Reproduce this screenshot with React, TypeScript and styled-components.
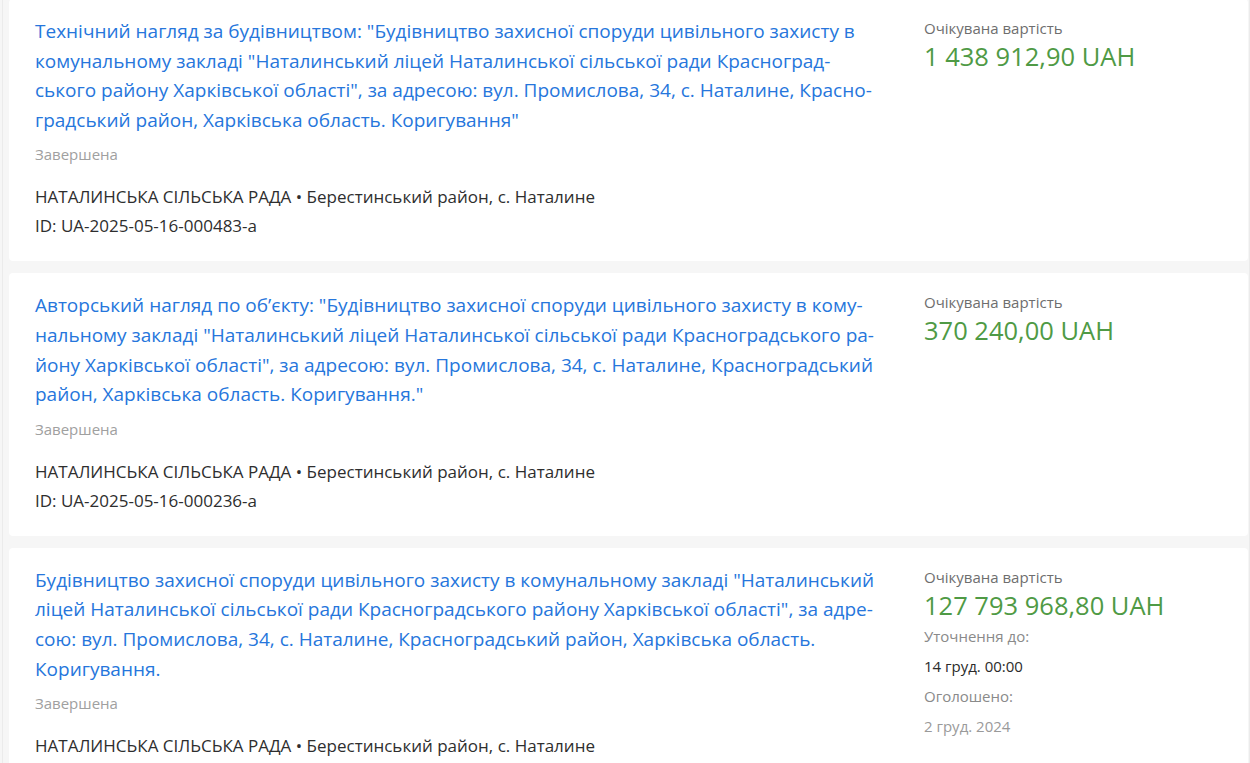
import React from "react";
import styled, { createGlobalStyle } from "styled-components";

const GlobalStyle = createGlobalStyle`
  html, body {
    margin: 0;
    padding: 0;
    background: #f6f6f6;
  }
  body {
    font-family: "Open Sans", "Noto Sans", "Liberation Sans", sans-serif;
    -webkit-font-smoothing: antialiased;
  }
`;

type Tender = {
  title: string;
  status: string;
  buyer: string;
  place: string;
  id?: string;
  amount: string;
  dates?: { label: string; value: string; muted?: boolean }[];
};

const tenders: Tender[] = [
  {
    title:
      "Технічний нагляд за будівництвом: \"Будівництво захисної споруди цивільного захисту в комунальному закладі \"Наталинський ліцей Наталинської сільської ради Красноград\u00ADського району Харківської області\", за адресою: вул. Промислова, 34, с. Наталине, Красно\u00ADградський район, Харківська область. Коригування\"",
    status: "Завершена",
    buyer: "НАТАЛИНСЬКА СІЛЬСЬКА РАДА",
    place: "Берестинський район, с. Наталине",
    id: "UA-2025-05-16-000483-a",
    amount: "1 438 912,90 UAH",
  },
  {
    title:
      "Авторський нагляд по об’єкту: \"Будівництво захисної споруди цивільного захисту в кому\u00ADнальному закладі \"Наталинський ліцей Наталинської сільської ради Красноградського ра\u00ADйону Харківської області\", за адресою: вул. Промислова, 34, с. Наталине, Красноградський район, Харківська область. Коригування.\"",
    status: "Завершена",
    buyer: "НАТАЛИНСЬКА СІЛЬСЬКА РАДА",
    place: "Берестинський район, с. Наталине",
    id: "UA-2025-05-16-000236-a",
    amount: "370 240,00 UAH",
  },
  {
    title:
      "Будівництво захисної споруди цивільного захисту в комунальному закладі \"Наталинський ліцей Наталинської сільської ради Красноградського району Харківської області\", за адре\u00ADсою: вул. Промислова, 34, с. Наталине, Красноградський район, Харківська область. Коригування.",
    status: "Завершена",
    buyer: "НАТАЛИНСЬКА СІЛЬСЬКА РАДА",
    place: "Берестинський район, с. Наталине",
    amount: "127 793 968,80 UAH",
    dates: [
      { label: "Уточнення до:", value: "14 груд. 00:00" },
      { label: "Оголошено:", value: "2 груд. 2024", muted: true },
    ],
  },
];

export default function App() {
  return (
    <>
      <GlobalStyle />
      <Page>
        <List>
          {tenders.map((t, i) => (
            <Card key={i}>
              <Main>
                <Title href="#">{t.title}</Title>
                <Status>{t.status}</Status>
                <Meta>
                  <MetaRow>
                    {t.buyer} • {t.place}
                  </MetaRow>
                  {t.id && <MetaRow>ID: {t.id}</MetaRow>}
                </Meta>
              </Main>
              <Side>
                <Label>Очікувана вартість</Label>
                <Amount>{t.amount}</Amount>
                {t.dates?.map((d) => (
                  <React.Fragment key={d.label}>
                    <SmallLabel>{d.label}</SmallLabel>
                    <SmallValue $muted={d.muted}>{d.value}</SmallValue>
                  </React.Fragment>
                ))}
              </Side>
            </Card>
          ))}
        </List>
      </Page>
    </>
  );
}

const Page = styled.div`
  margin-left: 2px;
  border-left: 1px solid #ebebeb;
  border-right: 1px solid #ebebeb;
  padding: 0 1px 0 6px;
  min-height: 100vh;
  box-sizing: border-box;
`;

const List = styled.div`
  display: flex;
  flex-direction: column;
  gap: 12px;
  margin-top: -1px;
`;

const Card = styled.div`
  display: grid;
  grid-template-columns: 848px 1fr;
  column-gap: 41px;
  background: #fff;
  border-radius: 4px;
  padding: 18px 26px 23px;
`;

const Main = styled.div`
  display: flex;
  flex-direction: column;
  min-width: 0;
`;

const Title = styled.a`
  color: #2676dc;
  font-size: 19px;
  line-height: 29.6px;
  text-decoration: none;
  hyphens: manual;
`;

const Status = styled.div`
  margin-top: 8px;
  color: #a0a0a0;
  font-size: 15px;
  line-height: 22px;
`;

const Meta = styled.div`
  margin-top: 19px;
  display: flex;
  flex-direction: column;
  gap: 4px;
`;

const MetaRow = styled.div`
  color: #2e2e2e;
  font-size: 17px;
  line-height: 25px;
`;

const Side = styled.div`
  display: flex;
  flex-direction: column;
  padding-top: 1px;
`;

const Label = styled.div`
  color: #6e6e6e;
  font-size: 15px;
  line-height: 20px;
`;

const Amount = styled.div`
  color: #4f9a45;
  font-size: 25.5px;
  line-height: 32px;
  margin-top: 2px;
`;

const SmallLabel = styled.div`
  color: #8a8a8a;
  font-size: 15px;
  line-height: 30px;
`;

const SmallValue = styled.div<{ $muted?: boolean }>`
  color: ${(p) => (p.$muted ? "#9a9a9a" : "#2b2b2b")};
  font-size: 15px;
  line-height: 30px;
`;
